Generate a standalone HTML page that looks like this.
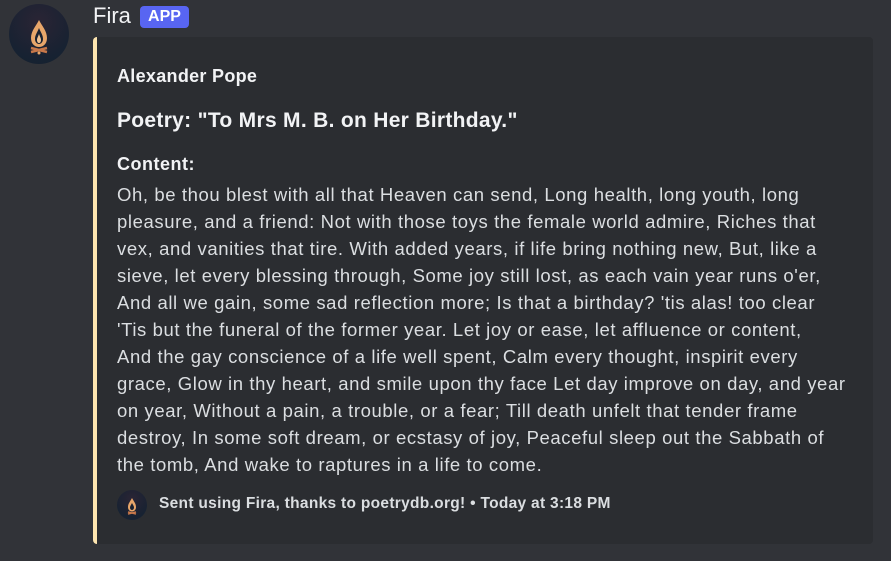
<!DOCTYPE html>
<html><head><meta charset="utf-8"><style>
html,body{margin:0;padding:0;width:891px;height:561px;background:#313338;overflow:hidden;font-family:"Liberation Sans",sans-serif;}
.av{position:absolute;left:9px;top:4px;width:60px;height:60px;border-radius:50%;background:radial-gradient(circle at 50% 30%,#2a2434,#172232 70%,#14202e);}
.name{position:absolute;left:93px;top:3px;font-size:22px;color:#f2f3f5;}
.app{position:absolute;left:140px;top:6px;width:49px;height:22px;background:#5865f2;border-radius:4px;color:#fff;font-weight:bold;font-size:16px;text-align:center;line-height:22px;}
.embed{position:absolute;left:93px;top:37px;width:780px;height:507px;background:#2b2d31;border-radius:4px;border-left:4px solid #fee6b0;box-sizing:border-box;}
.t{position:absolute;left:117px;color:#f2f3f5;font-weight:bold;white-space:nowrap;}
.body{position:absolute;left:117px;top:181px;color:#dbdee1;font-size:18.5px;letter-spacing:0.6px;line-height:27px;white-space:nowrap;}
.fav{position:absolute;left:117px;top:490px;width:30px;height:30px;border-radius:50%;background:radial-gradient(circle at 50% 30%,#2a2434,#172232 70%);}
.foot{position:absolute;left:159px;top:495px;color:#dbdee1;font-size:15.5px;letter-spacing:0.3px;font-weight:bold;white-space:nowrap;}
</style></head><body>
<div class="av"><svg width="60" height="60" viewBox="0 0 60 60"><path d="M30 16 C33 22 38 27 38 34 C38 40 34 43 30 43 C26 43 22 40 22 34 C22 27 27 22 30 16Z" fill="#e8a66a"/><path d="M30 24 C32 29 34 31 34 35 C34 38 32 40 30 40 C28 40 26 38 26 35 C26 31 28 29 30 24Z" fill="#1a2130"/><path d="M30 30 C31 33 32 34 32 36 C32 38 31 39 30 39 C29 39 28 38 28 36 C28 34 29 33 30 30Z" fill="#f0c090"/><path d="M22 44 L38 48 M38 44 L22 48" stroke="#c8784a" stroke-width="2.5"/><circle cx="30" cy="49" r="1.5" fill="#e8a66a"/></svg></div>
<div class="name">Fira</div>
<div class="app">APP</div>
<div class="embed"></div>
<div class="t" style="top:66px;font-size:18px;letter-spacing:0.3px;">Alexander Pope</div>
<div class="t" style="top:109px;font-size:21px;letter-spacing:0.3px;">Poetry: "To Mrs M. B. on Her Birthday."</div>
<div class="t" style="top:154px;font-size:18px;letter-spacing:0.5px;">Content:</div>
<div class="body">Oh, be thou blest with all that Heaven can send, Long health, long youth, long<br>pleasure, and a friend: Not with those toys the female world admire, Riches that<br>vex, and vanities that tire. With added years, if life bring nothing new, But, like a<br>sieve, let every blessing through, Some joy still lost, as each vain year runs o'er,<br>And all we gain, some sad reflection more; Is that a birthday? 'tis alas! too clear<br>'Tis but the funeral of the former year. Let joy or ease, let affluence or content,<br>And the gay conscience of a life well spent, Calm every thought, inspirit every<br>grace, Glow in thy heart, and smile upon thy face Let day improve on day, and year<br>on year, Without a pain, a trouble, or a fear; Till death unfelt that tender frame<br>destroy, In some soft dream, or ecstasy of joy, Peaceful sleep out the Sabbath of<br>the tomb, And wake to raptures in a life to come.</div>
<div class="fav"><svg width="30" height="30" viewBox="0 0 60 60"><path d="M30 16 C33 22 38 27 38 34 C38 40 34 43 30 43 C26 43 22 40 22 34 C22 27 27 22 30 16Z" fill="#e8a66a"/><path d="M30 26 C32 30 34 32 34 35 C34 38 32 40 30 40 C28 40 26 38 26 35 C26 32 28 30 30 26Z" fill="#1a2130"/><path d="M22 44 L38 48 M38 44 L22 48" stroke="#c8784a" stroke-width="3"/></svg></div>
<div class="foot">Sent using Fira, thanks to poetrydb.org! • Today at 3:18 PM</div>
</body></html>
